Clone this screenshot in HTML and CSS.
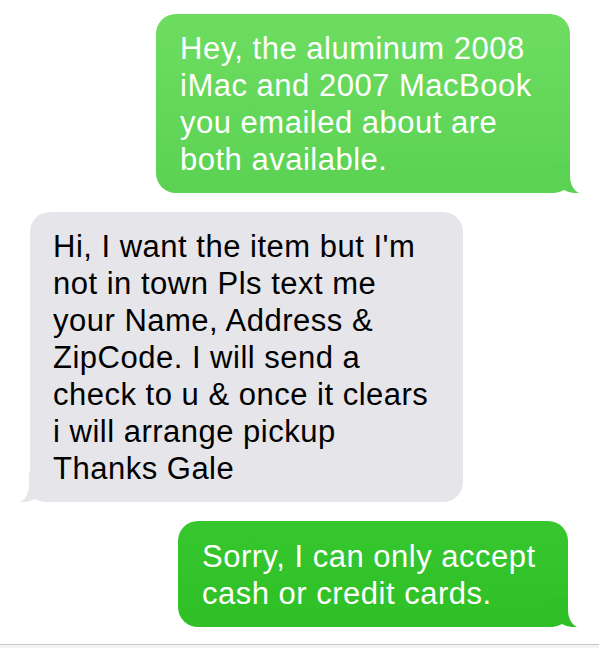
FILE: index.html
```html
<!DOCTYPE html>
<html lang="en">
<head>
<meta charset="utf-8">
<title>Messages</title>
<link rel="stylesheet" href="styles.css">
</head>
<body>
<main class="thread">
  <div class="bubble sent sent-top">
    <p class="text">Hey, the aluminum 2008<br>iMac and 2007 MacBook<br>you emailed about are<br>both available.</p>
    <svg class="tail tail-right" viewBox="0 0 30 30" aria-hidden="true"><path d="M0,0 H21 V12 C21,21 24,27 30,30 C25,30.5 19,29.5 15,27 C11,29.5 6,30 0,30 Z"/></svg>
  </div>
  <div class="bubble received">
    <p class="text">Hi, I want the item but I'm<br>not in town Pls text me<br>your Name, Address &amp;<br>ZipCode. I will send a<br>check to u &amp; once it clears<br>i will arrange pickup<br>Thanks Gale</p>
    <svg class="tail tail-left" viewBox="0 0 30 30" aria-hidden="true"><path d="M30,0 H9 V12 C9,21 6,27 0,30 C5,30.5 11,29.5 15,27 C19,29.5 24,30 30,30 Z"/></svg>
  </div>
  <div class="bubble sent sent-bottom">
    <p class="text">Sorry, I can only accept<br>cash or credit cards.</p>
    <svg class="tail tail-right" viewBox="0 0 30 30" aria-hidden="true"><path d="M0,0 H21 V12 C21,21 24,27 30,30 C25,30.5 19,29.5 15,27 C11,29.5 6,30 0,30 Z"/></svg>
  </div>
</main>
<footer class="composer"></footer>
</body>
</html>
```
FILE: styles.css
```css
html, body {
  margin: 0;
  padding: 0;
  background: #ffffff;
}

body {
  font-family: "Liberation Sans", Arial, Helvetica, sans-serif;
  width: 599px;
  height: 648px;
  overflow: hidden;
}

.thread {
  display: flex;
  flex-direction: column;
  gap: 19px;
  padding: 14px 29px 0 30px;
}

.bubble {
  position: relative;
  border-radius: 20px;
  padding: 16px 32px 15px 24px;
}

.text {
  margin: 0;
  font-size: 31px;
  line-height: 37px;
  letter-spacing: 0.5px;
  white-space: nowrap;
}

.sent {
  align-self: flex-end;
  color: #ffffff;
}

.sent-top {
  background: linear-gradient(#6ddd61, #5bd253);
  width: 358px;
}

.sent-top .tail {
  fill: #5bd253;
}

.sent-bottom {
  background: linear-gradient(#37c62e, #2ec026);
  width: 334px;
  margin-right: 2px;
  padding-top: 17px;
}

.sent-bottom .tail {
  fill: #2ec026;
}

.received {
  align-self: flex-start;
  background: #e5e5ea;
  color: #000000;
  padding-left: 23px;
  width: 378px;
}

.received .tail {
  fill: #e5e5ea;
}

.tail {
  position: absolute;
  bottom: 0;
  width: 30px;
  height: 30px;
}

.tail-right {
  right: -9px;
}

.tail-left {
  left: -10px;
}

.composer {
  margin-top: 17px;
  height: 6px;
  border-top: 1px solid #c8c8c8;
  background: #f4f4f5;
}
```
